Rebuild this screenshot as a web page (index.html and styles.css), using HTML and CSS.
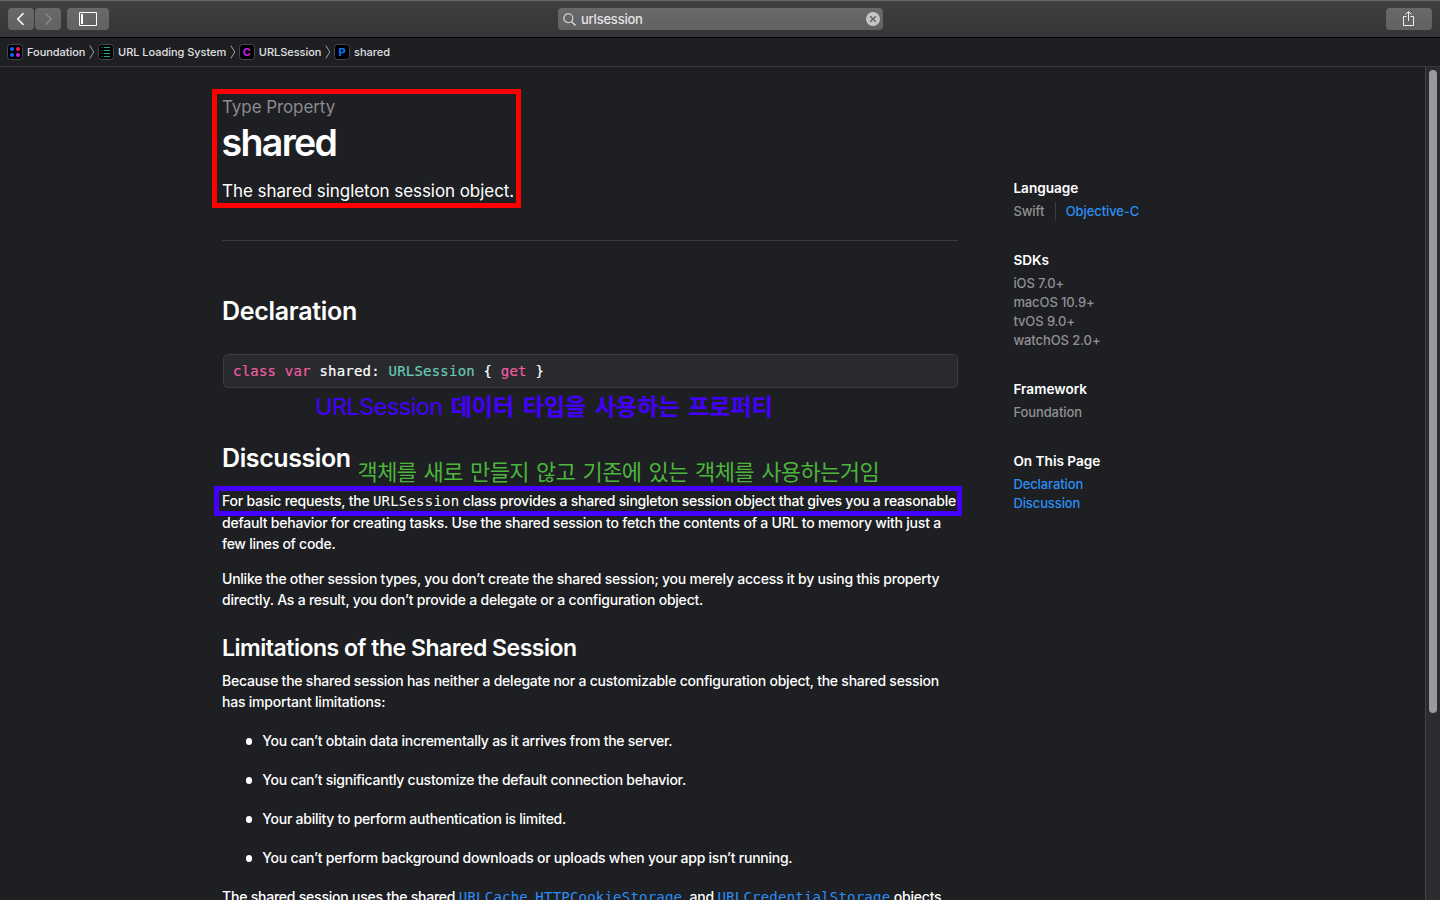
FILE: index.html
```html
<!DOCTYPE html>
<html lang="en">
<head>
<meta charset="utf-8">
<title>shared</title>
<link rel="stylesheet" href="styles.css">
</head>
<body>
<header class="toolbar">
  <div class="tools">
    <span class="btn nav"><svg width="26" height="22" viewBox="0 0 26 22"><path d="M15.5 5.2 9.8 11l5.7 5.8" fill="none" stroke="#f2f2f2" stroke-width="1.7"/></svg></span>
    <span class="btn nav"><svg width="26" height="22" viewBox="0 0 26 22"><path d="M10.5 5.2 16.2 11l-5.7 5.8" fill="none" stroke="#8b8c8e" stroke-width="1.5"/></svg></span>
    <span class="btn side"><svg width="42" height="22" viewBox="0 0 42 22"><path d="M12.5 4.5h17v13h-17z" fill="none" stroke="#fff"/><path d="M14 6h2v10h-2z" fill="#fff"/></svg></span>
  </div>
  <div class="search">
    <svg width="13" height="13" viewBox="0 0 13 13"><circle cx="5.3" cy="5.3" r="4.5" fill="none" stroke="#e4e4e4" stroke-width="1.1"/><path d="m8.5 8.5 4 4" stroke="#e4e4e4" stroke-width="1.2"/></svg>
    <span class="query"><span class="t">urlsession</span></span>
    <svg width="14" height="14" viewBox="0 0 14 14"><circle cx="7" cy="7" r="7" fill="#c4c5c6"/><path d="m4.2 4.2 5.6 5.6m0-5.6L4.2 9.8" stroke="#5f6062" stroke-width="1.4"/></svg>
  </div>
  <span class="btn share"><svg width="46" height="22" viewBox="0 0 46 22"><path d="M20.500 8.500h-3v9h10v-9h-3M22.500 13V4" fill="none" stroke="#eee"/><path d="m19.500 6.500 3-3 3 3" fill="none" stroke="#eee"/></svg></span>
</header>
<nav class="crumbs">
  <svg class="ic" width="16" height="16" viewBox="0 0 16 16"><rect x=".5" y=".5" width="15" height="15" rx="3" fill="#000" stroke="#47484a"/><circle cx="5" cy="5" r="2" fill="#0a6cff"/><circle cx="11" cy="5" r="2" fill="#ff1450"/><circle cx="5" cy="11" r="2" fill="#0a6cff"/><circle cx="11" cy="11" r="2" fill="#c322e8"/></svg>
  <span class="t">Foundation</span>
  <svg class="sep" width="6" height="14" viewBox="0 0 6 14"><path d="m.8.5 4 6.500-4 6.500" fill="none" stroke="#a0a0a2"/></svg>
  <svg class="ic" width="16" height="16" viewBox="0 0 16 16"><rect x=".5" y=".5" width="15" height="15" rx="3" fill="#000" stroke="#47484a"/><path d="M6 3.500h6M6 6.500h6M6 9.500h6M6 12.500h6M3.500 3.500h1M3.500 6.500h1M3.500 9.500h1M3.500 12.500h1" stroke="#2aa19b"/></svg>
  <span class="t">URL Loading System</span>
  <svg class="sep" width="6" height="14" viewBox="0 0 6 14"><path d="m.8.5 4 6.500-4 6.500" fill="none" stroke="#a0a0a2"/></svg>
  <span class="badge cls">C</span>
  <span class="t">URLSession</span>
  <svg class="sep" width="6" height="14" viewBox="0 0 6 14"><path d="m.8.5 4 6.500-4 6.500" fill="none" stroke="#a0a0a2"/></svg>
  <span class="badge prop">P</span>
  <span class="t">shared</span>
</nav>
<div class="view">
  <main class="doc">
    <div class="eyebrow">Type Property</div>
    <h1>shared</h1>
    <div class="abstract">The shared singleton session object.</div>
    <h2 class="decl">Declaration</h2>
    <pre class="code"><b>class</b> <b>var</b> shared: <i>URLSession</i> { <b>get</b> }</pre>
    <h2 class="disc">Discussion</h2>
    <p>
      <span class="t tall">For basic requests, the <code>URLSession</code> class provides a shared singleton session object that gives you a reasonable</span>
      <span class="t">default behavior for creating tasks. Use the shared session to fetch the contents of a URL to memory with just a</span>
      <span class="t short">few lines of code.</span>
    </p>
    <p>
      <span class="t wide">Unlike the other session types, you don’t create the shared session; you merely access it by using this property</span>
      <span class="t">directly. As a result, you don’t provide a delegate or a configuration object.</span>
    </p>
    <h3>Limitations of the Shared Session</h3>
    <p>
      <span class="t wide">Because the shared session has neither a delegate nor a customizable configuration object, the shared session</span>
      <span class="t">has important limitations:</span>
    </p>
    <ul>
      <li>You can’t obtain data incrementally as it arrives from the server.</li>
      <li>You can’t significantly customize the default connection behavior.</li>
      <li>Your ability to perform authentication is limited.</li>
      <li>You can’t perform background downloads or uploads when your app isn’t running.</li>
    </ul>
    <p class="last"><span class="t">The shared session uses the shared <a><code>URLCache</code></a>, <a><code>HTTPCookieStorage</code></a>, and <a><code>URLCredentialStorage</code></a> objects</span></p>
  </main>
  <aside>
    <section><h4>Language</h4><div class="langs"><span>Swift</span><a>Objective-C</a></div></section>
    <section><h4>SDKs</h4><div>iOS 7.0+</div><div>macOS 10.9+</div><div>tvOS 9.0+</div><div>watchOS 2.0+</div></section>
    <section><h4>Framework</h4><div>Foundation</div></section>
    <section><h4>On This Page</h4><div><a>Declaration</a></div><div><a>Discussion</a></div></section>
  </aside>
  <div class="track"><div class="thumb"></div></div>
</div>
<div class="mark red"></div>
<div class="mark blue"></div>
<div class="note note-blue"><span class="latin">URLSession</span><b>데이터 타입을 사용하는 프로퍼티</b></div>
<div class="note note-green">객체를 새로 만들지 않고 기존에 있는 객체를 사용하는거임</div>
</body>
</html>
```
FILE: styles.css
```css
* { box-sizing: border-box; }
body { margin: 0; width: 1440px; height: 900px; overflow: hidden; position: relative; background: #1e1f23; color: #fff; font-family: Inter, "Noto Sans CJK KR", sans-serif; font-size: 14px; }
h1, h2, h3, h4, p, ul, pre { margin: 0; padding: 0; }
svg { display: block; flex: none; }
.t { white-space: nowrap; }
.toolbar { height: 38px; display: grid; grid-template-columns: 1fr 325px 1fr; align-items: center; padding: 0 8px; border-top: 1px solid #666769; border-bottom: 1px solid #000; background: linear-gradient(#3e3f41, #343537); }
.tools { display: flex; gap: 1px; }
.btn { height: 22px; border-radius: 4px; background: linear-gradient(#68696b, #606163); display: block; }
.nav { width: 26px; }
.side { width: 42px; margin-left: 5px; }
.share { width: 46px; justify-self: end; }
.search { height: 22px; border-radius: 4px; background: linear-gradient(#68696b, #606163); display: flex; align-items: center; padding: 0 3px 0 5px; }
.query { flex: 1; padding-left: 5.5px; font-size: 13px; color: #e4e4e5; font-weight: 500; letter-spacing: -.22px; }
.crumbs { height: 29px; display: flex; align-items: center; padding-left: 7px; border-bottom: 1px solid #38393c; font-size: 11px; font-weight: 500; color: #e0e0e1; letter-spacing: -.04px; }
.crumbs .t { margin-left: 4px; }
.sep { margin: 0 3px 0 3.7px; }
.badge { width: 16px; height: 16px; border: 1px solid #47484a; border-radius: 3.5px; background: #000; font-size: 11px; line-height: 14px; text-align: center; font-weight: 700; }
.cls { color: #c322e8; }
.prop { color: #0a78ff; }
.view { height: 833px; overflow: hidden; display: grid; grid-template-columns: 736px 1fr 15px; column-gap: 55px; padding-left: 222px; }
.track { border-left: 1px solid #424346; background: #2c2c2e; width: 15px; padding: 3px 0 0 3px; }
.thumb { width: 8px; height: 643px; border-radius: 4px; background: #9a9a9c; }
.eyebrow { margin-top: 28px; font-size: 17px; line-height: 24px; color: #8b8b8d; letter-spacing: -.08px; }
h1 { font-size: 37.5px; line-height: 48px; font-weight: 600; letter-spacing: -1.65px; margin-left: -.5px; }
.abstract { font-size: 17px; line-height: 26px; margin-top: 11px; padding-bottom: 36px; border-bottom: 1px solid #3a3b3e; letter-spacing: -.06px; }
h2 { font-size: 25px; line-height: 32px; font-weight: 600; letter-spacing: -.3px; }
.decl { margin-top: 54px; }
.code { margin-top: 27px; height: 34px; border: 1px solid #3c3d41; border-radius: 5px; background: #292a2e; margin-left: 1px; padding-left: 9px; font: 14px/32px "DejaVu Sans Mono", monospace; letter-spacing: .21px; -webkit-text-stroke: .2px; }
.code b { color: #ee5da2; font-weight: 400; }
.code i { color: #66c9b5; font-style: normal; }
code { font-family: "DejaVu Sans Mono", monospace; font-size: 14px; line-height: 1; letter-spacing: .21px; }
.disc { margin-top: 54px; letter-spacing: -.4px; }
p { font-weight: 500; line-height: 21px; letter-spacing: -.218px; }
p .t { display: table; height: 21px; }
p .tall { height: 22px; letter-spacing: -.227px; }
p .wide { letter-spacing: -.236px; }
p .short { letter-spacing: -.28px; }
.disc + p { margin-top: 16px; }
p + p { margin-top: 14px; }
h3 { font-size: 23px; line-height: 30px; font-weight: 600; margin-top: 23px; letter-spacing: -.49px; }
h3 + p { margin-top: 7px; }
ul { list-style: none; margin: 18px 0; padding-left: 40px; display: grid; gap: 18px; }
li { line-height: 21px; font-weight: 500; position: relative; letter-spacing: -.25px; padding-left: .3px; }
li::before { content: ""; position: absolute; left: -16.5px; top: 8px; width: 6.5px; height: 6.5px; border-radius: 50%; background: #fff; }
a { color: #2b8ef5; }
aside { padding: 112px 0 0 .4px; font-size: 13px; line-height: 19px; color: #909092; font-weight: 500; letter-spacing: -.1px; }
aside section { margin-bottom: 30px; }
aside h4 { color: #fff; font-size: 13.6px; font-weight: 600; line-height: 19px; margin-bottom: 4px; letter-spacing: 0; }
.langs { display: flex; }
.langs a { margin-left: 10.5px; padding-left: 10px; border-left: 1px solid #3a3b3e; }
.mark { position: absolute; }
.red { left: 212px; top: 89px; width: 309px; height: 119px; border: 5px solid #f00; }
.blue { left: 214px; top: 486px; width: 748px; height: 30px; border: 5px solid #40f; }
.note { position: absolute; white-space: nowrap; line-height: 34px; }
.note-blue { left: 315px; top: 390px; display: flex; gap: 8px; font-size: 23px; color: #40f; }
.latin { font-size: 23.5px; letter-spacing: -.55px; }
.note-blue b { word-spacing: 3.2px; }
.note-green { left: 357.5px; top: 454.5px; font-size: 22px; letter-spacing: -.58px; word-spacing: 1.5px; color: #4bb53c; }
```
